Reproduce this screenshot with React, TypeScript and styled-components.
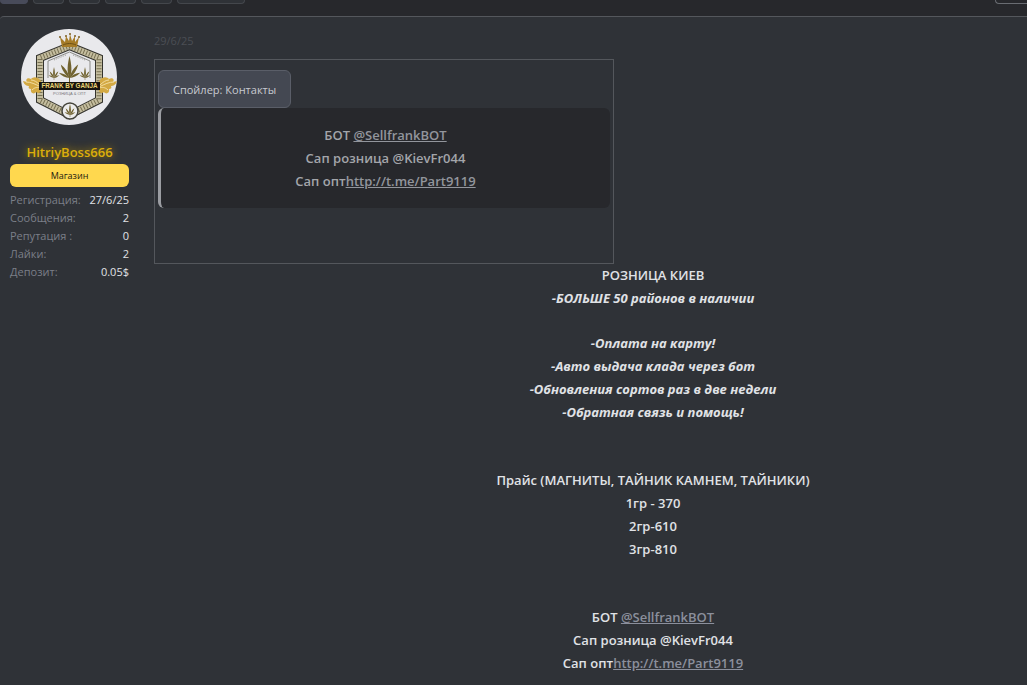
import React from 'react';
import styled, { createGlobalStyle } from 'styled-components';

const GlobalStyle = createGlobalStyle`
  *, *::before, *::after { box-sizing: border-box; }
  body {
    margin: 0;
    background: #2f3237;
    color: #e0e2e6;
    font-family: "Open Sans", "Noto Sans", sans-serif;
    font-size: 13px;
  }
`;

const Page = styled.div`
  min-height: 100vh;
  overflow: hidden;
  background: #27282c;
`;

const PagerBar = styled.nav`
  display: flex;
  gap: 5px;
  height: 16px;
  align-items: flex-start;
`;

const PagerTab = styled.button<{ $width: number; $active?: boolean }>`
  width: ${(p) => p.$width}px;
  height: 4px;
  padding: 0;
  border: 1px solid ${(p) => (p.$active ? '#484b5a' : '#44474c')};
  border-top: 0;
  border-radius: 0 0 5px 5px;
  background: ${(p) => (p.$active ? '#484b5a' : '#2f3237')};
`;

const PagerEnd = styled(PagerTab)`
  margin-left: auto;
  border-color: #696c72;
  border-right: 0;
  border-radius: 0 0 0 6px;
  background: #27282c;
`;

const Post = styled.article`
  display: flex;
  min-height: calc(100vh - 16px);
  border-top: 1px solid #54575c;
  border-radius: 4px 0 0 0;
  background: #2f3237;
`;

const UserCell = styled.aside`
  flex: none;
  width: 139px;
  padding: 12px 10px;
`;

const Avatar = styled.svg`
  display: block;
  width: 96px;
  height: 96px;
  margin: 0 auto 18px 11px;
  border-radius: 50%;
`;

const UserName = styled.a`
  display: block;
  line-height: 18px;
  margin-bottom: 3px;
  text-align: center;
  font-weight: 600;
  color: #dcae0a;
  text-decoration: none;
  text-shadow: 0 0 8px #b8900a;
`;

const Rank = styled.strong`
  display: block;
  height: 23px;
  margin-bottom: 4px;
  border-radius: 6px;
  background: #ffd84e;
  color: #1c1a10;
  text-align: center;
  font-size: 9px;
  font-weight: 400;
  line-height: 24px;
`;

const Stats = styled.dl`
  margin: 0;
  font-size: 11px;
  line-height: 18px;
`;

const Stat = styled.div`
  display: flex;
  justify-content: space-between;
  white-space: nowrap;
`;

const StatName = styled.dt`
  color: #7b7f88;
`;

const StatValue = styled.dd`
  margin: 0;
  color: #e0e2e6;
`;

/* The message column is wider than the window and runs past its right edge. */
const Message = styled.div`
  flex: 1;
  margin-right: -125px;
  padding: 15px 0 0 15px;
`;

const PostDate = styled.time`
  display: block;
  margin-bottom: 9px;
  font-size: 11px;
  line-height: 18px;
  color: #4b4e54;
`;

const SpoilerFrame = styled.section`
  max-width: 460px;
  min-height: 205px;
  padding: 10px 3px;
  border: 1px solid #54575c;
`;

const SpoilerButton = styled.button`
  display: block;
  height: 38px;
  padding: 0 14px;
  border: 1px solid #5a5e68;
  border-radius: 6px;
  background: #444852;
  color: #c8cad0;
  font: 400 11px "Open Sans", "Noto Sans", sans-serif;
`;

const SpoilerBody = styled.div`
  padding: 16px 0 15px;
  border-left: 3px solid #9b9da2;
  border-radius: 6px;
  background: #27282c;
  color: #a3a5aa;
`;

const Lines = styled.p<{ $gap?: number; $italic?: boolean }>`
  margin: 0 0 ${(p) => p.$gap ?? 0}px;
  text-align: center;
  font-weight: ${(p) => (p.$italic ? 700 : 600)};
  line-height: 23px;
  font-style: ${(p) => (p.$italic ? 'italic' : 'normal')};
`;

const Link = styled.a<{ $dim?: boolean }>`
  color: ${(p) => (p.$dim ? '#92959c' : '#8b8f9c')};
  text-decoration: underline;
`;

const stats = [
  ['Регистрация:', '27/6/25'],
  ['Сообщения:', '2'],
  ['Репутация :', '0'],
  ['Лайки:', '2'],
  ['Депозит:', '0.05$'],
];

const LEAF = 'M0 0C-3 -6 -2 -14 0 -22C2 -14 3 -6 0 0';
const SIDE = 'M0 0C-2 -5 -2 -11 0 -16C2 -10 2 -5 0 0';

function Leaf({ x, y, scale }: { x: number; y: number; scale: number }) {
  return (
    <g transform={`translate(${x} ${y}) scale(${scale})`} fill="#716330">
      <path d={LEAF} />
      <path d={SIDE} transform="rotate(-33)" />
      <path d={SIDE} transform="rotate(33)" />
      <path d={SIDE} transform="rotate(-64) scale(.75)" />
      <path d={SIDE} transform="rotate(64) scale(.75)" />
      <path d="M0 -3V4" stroke="#716330" strokeWidth="1" />
    </g>
  );
}

function Flourish({ flip }: { flip?: boolean }) {
  return (
    <g transform={flip ? 'translate(98 0) scale(-1 1)' : undefined}>
      <path
        d="M20 52C16 47 12 48 10 50C7 48 4 50 6 53L2 52C3 56 6 57 8 57C7 59 8 60 10 60C9 64 13 66 15 63C17 65 20 64 20 61Z"
        fill="#d3a943"
      />
      <path d="M5 53C10 53 14 55 20 58M10 51C13 51 16 53 19 56M11 61C14 58 17 58 20 59" fill="none" stroke="#f2dda0" strokeWidth="1" />
    </g>
  );
}

function Emblem() {
  return (
    <Avatar viewBox="0 0 96 96" role="img" aria-label="Frank by Ganja">
      <rect width="96" height="96" fill="#e9e9ec" />
      <path d="M48.500 17L78 29V71L48.500 86L19 71V29Z" fill="none" stroke="#34332d" strokeWidth="8" />
      <path d="M48.500 17L78 29V71L48.500 86L19 71V29Z" fill="none" stroke="#c4bd9f" strokeWidth="6" />
      <path d="M48.500 17L78 29V71L48.500 86L19 71V29Z" fill="none" stroke="#777052" strokeWidth="5" strokeDasharray="1 2" />
      <path d="M27 49V32L48.500 23L69 32V49" fill="none" stroke="#8a8a86" strokeWidth="1" />
      <path d="M33 31L45 26M52 26L64 31" stroke="#9a9a96" strokeWidth="1" strokeDasharray="1 1" />
      <path d="M41 18L39 8L44 13L45 7L48 12L49 5L51 12L54 7L54 13L58 8L56 18Z" fill="#a67c28" />
      <path d="M42 16C46 14 51 14 55 16" fill="none" stroke="#6d5015" strokeWidth="1" />
      <g fill="#7d5e21">
        <circle cx="39" cy="8" r="1" />
        <circle cx="45" cy="7" r="1" />
        <circle cx="49" cy="5" r="1" />
        <circle cx="54" cy="7" r="1" />
        <circle cx="58" cy="8" r="1" />
      </g>
      <Leaf x={48.5} y={49} scale={1} />
      <Leaf x={33} y={49} scale={0.5} />
      <Leaf x={64} y={49} scale={0.5} />
      <Flourish />
      <Flourish flip />
      <rect x="18" y="53" width="61" height="8" fill="#17150f" />
      <text x="48.500" y="59.300" textAnchor="middle" fontFamily="Liberation Sans, sans-serif" fontWeight="700" fontSize="6.300" fill="#ead477">
        FRANK BY GANJA
      </text>
      <text x="48.500" y="65.500" textAnchor="middle" fontFamily="Liberation Sans, sans-serif" fontSize="4" fill="#77767a">
        РОЗНИЦА &amp; ОПТ
      </text>
      <circle cx="49" cy="82" r="8" fill="#ececec" stroke="#45443b" strokeWidth="1.500" />
      <Leaf x={49} y={86} scale={0.5} />
    </Avatar>
  );
}

function Contacts({ dim }: { dim?: boolean }) {
  return (
    <Lines>
      БОТ <Link href="#bot" $dim={dim}>@SellfrankBOT</Link>
      <br />
      Сап розница @KievFr044
      <br />
      Сап опт<Link href="#wholesale" $dim={dim}>http://t.me/Part9119</Link>
    </Lines>
  );
}

export default function App() {
  return (
    <>
      <GlobalStyle />
      <Page>
        <PagerBar aria-label="Страницы">
          <PagerTab $width={28} $active aria-label="1" />
          <PagerTab $width={31} aria-label="2" />
          <PagerTab $width={31} aria-label="3" />
          <PagerTab $width={31} aria-label="4" />
          <PagerTab $width={31} aria-label="5" />
          <PagerTab $width={68} aria-label="Вперёд" />
          <PagerEnd $width={32} aria-label="Поиск" />
        </PagerBar>
        <Post>
          <UserCell>
            <Emblem />
            <UserName href="#user">HitriyBoss666</UserName>
            <Rank>Магазин</Rank>
            <Stats>
              {stats.map(([name, value]) => (
                <Stat key={name}>
                  <StatName>{name}</StatName>
                  <StatValue>{value}</StatValue>
                </Stat>
              ))}
            </Stats>
          </UserCell>
          <Message>
            <PostDate>29/6/25</PostDate>
            <SpoilerFrame>
              <SpoilerButton>Спойлер: Контакты</SpoilerButton>
              <SpoilerBody>
                <Contacts dim />
              </SpoilerBody>
            </SpoilerFrame>
            <Lines>РОЗНИЦА КИЕВ</Lines>
            <Lines $italic $gap={22}>-БОЛЬШЕ 50 районов в наличии</Lines>
            <Lines $italic $gap={45}>
              -Оплата на карту!
              <br />
              -Авто выдача клада через бот
              <br />
              -Обновления сортов раз в две недели
              <br />
              -Обратная связь и помощь!
            </Lines>
            <Lines $gap={45}>
              Прайс (МАГНИТЫ, ТАЙНИК КАМНЕМ, ТАЙНИКИ)
              <br />
              1гр - 370
              <br />
              2гр-610
              <br />
              3гр-810
            </Lines>
            <Contacts />
          </Message>
        </Post>
      </Page>
    </>
  );
}
